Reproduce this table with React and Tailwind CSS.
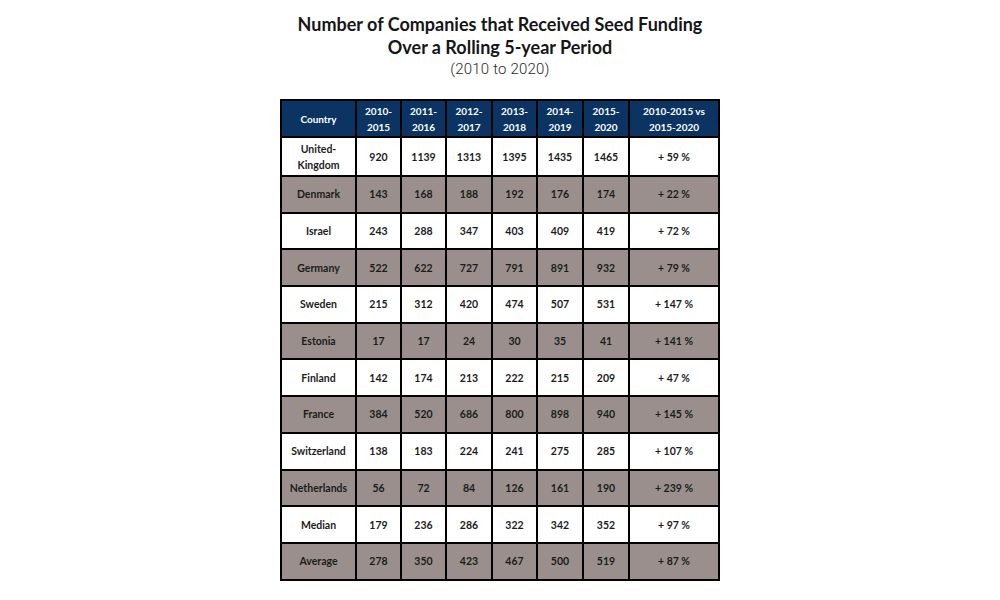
const header = ["Country", "2010-\n2015", "2011-\n2016", "2012-\n2017", "2013-\n2018", "2014-\n2019", "2015-\n2020", "2010-2015 vs\n2015-2020"];

const rows = [
  ["United-\nKingdom", 920, 1139, 1313, 1395, 1435, 1465, "+ 59 %"],
  ["Denmark", 143, 168, 188, 192, 176, 174, "+ 22 %"],
  ["Israel", 243, 288, 347, 403, 409, 419, "+ 72 %"],
  ["Germany", 522, 622, 727, 791, 891, 932, "+ 79 %"],
  ["Sweden", 215, 312, 420, 474, 507, 531, "+ 147 %"],
  ["Estonia", 17, 17, 24, 30, 35, 41, "+ 141 %"],
  ["Finland", 142, 174, 213, 222, 215, 209, "+ 47 %"],
  ["France", 384, 520, 686, 800, 898, 940, "+ 145 %"],
  ["Switzerland", 138, 183, 224, 241, 275, 285, "+ 107 %"],
  ["Netherlands", 56, 72, 84, 126, 161, 190, "+ 239 %"],
  ["Median", 179, 236, 286, 322, 342, 352, "+ 97 %"],
  ["Average", 278, 350, 423, 467, 500, 519, "+ 87 %"],
];

export default function App() {
  return (
    <div className="w-[1000px] h-[600px] bg-white flex flex-col items-center pt-[13px] font-['Lato',sans-serif]">
      <h1 className="text-[18px] leading-[23px] font-bold text-[#161616] text-center">
        Number of Companies that Received Seed Funding
        <br />
        Over a Rolling 5-year Period
      </h1>
      <p className="text-[15px] leading-[20px] font-light text-[#2a2a2a] font-['Roboto',sans-serif] tracking-[0.2px]">
        (2010 to 2020)
      </p>

      <div className="mt-[20px] bg-black p-[2px] grid gap-[2px] grid-cols-[73px_43px_43px_44px_43px_44px_44px_88px] grid-rows-[35px_37px_repeat(11,34.7px)]">
        {header.map((h, i) => (
          <div key={"h" + i} className="bg-[#0b3463] text-white text-[10px] leading-[16px] font-bold flex items-center justify-center text-center whitespace-pre-line">
            {h}
          </div>
        ))}
        {rows.map((r, ri) =>
          r.map((c, ci) => (
            <div
              key={ri + "-" + ci}
              className={`${ri % 2 === 1 ? "bg-[#9a8f8c]" : "bg-white"} text-[#1c1c1c] text-[10.5px] leading-[16px] font-bold flex items-center justify-center text-center whitespace-pre-line`}
            >
              {c}
            </div>
          ))
        )}
      </div>
    </div>
  );
}
